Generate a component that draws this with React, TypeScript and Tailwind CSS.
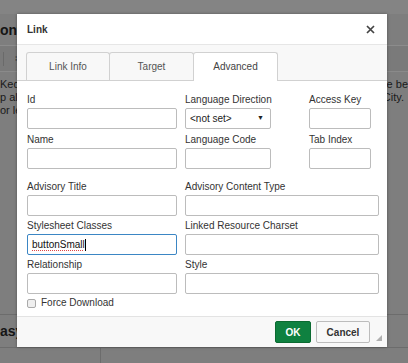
import React from 'react';

const Field = ({ label, width, className = '', children }: { label: string; width?: string; className?: string; children?: React.ReactNode }) => (
  <div className={`flex flex-col ${width ?? 'flex-1'} ${className}`}>
    <span className="mb-[2px] whitespace-nowrap text-[10px] leading-[12px] text-[#333]">{label}</span>
    {children ?? <div className="h-[21px] rounded-[2px] border border-[#bcbcbc] bg-white" />}
  </div>
);

export default function App() {
  return (
    <div className="relative h-[363px] w-[408px] overflow-hidden bg-[#7e7e7e] font-['Liberation_Sans',Arial,sans-serif]">
      {/* page underneath the overlay */}
      <div className="flex flex-col">
        <div className="h-[14px] bg-[#848484]" />
        <div className="flex h-[32px] items-center border-b border-[#8c8c8c]">
          <span className="text-[14px] font-bold leading-none text-[#151515]">ont</span>
        </div>
        <div className="flex h-[26px] items-center gap-[3px] border-b border-[#8a8a8a] bg-[#7a7a7a] pl-[3px]">
          <span className="h-[14px] w-px bg-[#6a6a6a]" />
          <span className="ml-[8px] text-[8px] leading-none text-[#222]">⁞⁞</span>
        </div>
        <div className="flex flex-col pt-[6px] text-[11px] leading-[13px] text-[#1a1a1a]">
          <div className="flex justify-between">
            <span>Ked</span>
            <span>he be</span>
          </div>
          <div className="flex justify-between">
            <span>p all</span>
            <span className="pr-[4px]">City.</span>
          </div>
          <span>or le</span>
        </div>
        <div className="mt-[197px] flex h-[34px] items-center border-y border-[#6c6c6c]">
          <span className="text-[14px] font-bold leading-none text-[#151515]">asy</span>
        </div>
        <div className="h-[20px] w-[101px] border-r border-[#6c6c6c]" />
      </div>

      {/* dialog */}
      <div className="absolute left-[17px] top-[14px] flex h-[333px] w-[370px] flex-col bg-white shadow-[0_0_3px_rgba(0,0,0,0.35)]">
        <div className="flex h-[31px] items-center justify-between border-b border-[#e6e6e6] pl-[10px] pr-[12px]">
          <span className="text-[10px] font-bold text-[#333]">Link</span>
          <svg width="9" height="9" viewBox="0 0 9 9">
            <path d="M1 1L8 8M8 1L1 8" stroke="#444" strokeWidth="1.7" />
          </svg>
        </div>

        <div className="flex h-[36px] items-end border-b border-[#d1d1d1] bg-[#f8f8f8] pl-[9px]">
          <div className="flex h-[28px] w-[84px] items-center justify-center rounded-t-[3px] border border-b-0 border-[#d1d1d1] bg-[#f8f8f8] text-[10px] text-[#555]">
            Link Info
          </div>
          <div className="-ml-px flex h-[28px] w-[85px] items-center justify-center rounded-t-[3px] border border-b-0 border-[#d1d1d1] bg-[#f8f8f8] text-[10px] text-[#555]">
            Target
          </div>
          <div className="-mb-px -ml-px flex h-[29px] w-[85px] items-center justify-center rounded-t-[3px] border border-b-0 border-[#d1d1d1] bg-white pb-px text-[10px] text-[#444]">
            Advanced
          </div>
        </div>

        <div className="flex flex-1 flex-col pl-[10px] pr-[8px] pt-[13px]">
          <div className="flex">
            <Field label="Id" width="w-[150px]" />
            <Field label="Language Direction" width="w-[86px]" className="ml-[8px]">
              <div className="flex h-[21px] items-center justify-between rounded-[2px] border border-[#bcbcbc] bg-white pl-[4px] pr-[6px] text-[10px] text-[#222]">
                <span>&lt;not set&gt;</span>
                <span className="text-[7px]">▼</span>
              </div>
            </Field>
            <Field label="Access Key" width="w-[62px]" className="ml-[38px]" />
          </div>
          <div className="mt-[5px] flex">
            <Field label="Name" width="w-[150px]" />
            <Field label="Language Code" width="w-[86px]" className="ml-[8px]" />
            <Field label="Tab Index" width="w-[62px]" className="ml-[38px]" />
          </div>
          <div className="mt-[12px] flex">
            <Field label="Advisory Title" width="w-[150px]" />
            <Field label="Advisory Content Type" className="ml-[8px]" />
          </div>
          <div className="mt-[4px] flex">
            <Field label="Stylesheet Classes" width="w-[150px]">
              <div className="flex h-[21px] items-center rounded-[2px] border border-[#3b86c4] bg-white pl-[4px] text-[10px] text-[#111]">
                <span className="underline decoration-[#d44] decoration-dotted decoration-1 underline-offset-2">buttonSmall</span>
                <span className="h-[12px] w-px bg-black" />
              </div>
            </Field>
            <Field label="Linked Resource Charset" className="ml-[8px]" />
          </div>
          <div className="mt-[4px] flex">
            <Field label="Relationship" width="w-[150px]" />
            <Field label="Style" className="ml-[8px]" />
          </div>
          <div className="mt-[3px] flex items-center">
            <span className="h-[9px] w-[9px] rounded-[2px] border border-[#aaa] bg-[#efefef]" />
            <span className="ml-[5px] text-[10px] leading-[12px] text-[#333]">Force Download</span>
          </div>
        </div>

        <div className="relative flex h-[31px] items-center justify-end gap-[5px] border-t border-[#e3e3e3] bg-[#f8f8f8] pr-[17px]">
          <button className="flex h-[22px] w-[36px] items-center justify-center rounded-[2px] border border-[#0b6a31] bg-[#0f8140] text-[10px] font-bold text-white">
            OK
          </button>
          <button className="flex h-[22px] w-[54px] items-center justify-center rounded-[2px] border border-[#bcbcbc] bg-[#f8f8f8] text-[10px] font-bold text-[#333]">
            Cancel
          </button>
          <svg className="absolute bottom-[6px] right-[5px]" width="6" height="6" viewBox="0 0 6 6">
            <path d="M6 0L6 6L0 6Z" fill="#b0b0b0" />
          </svg>
        </div>
      </div>
    </div>
  );
}
